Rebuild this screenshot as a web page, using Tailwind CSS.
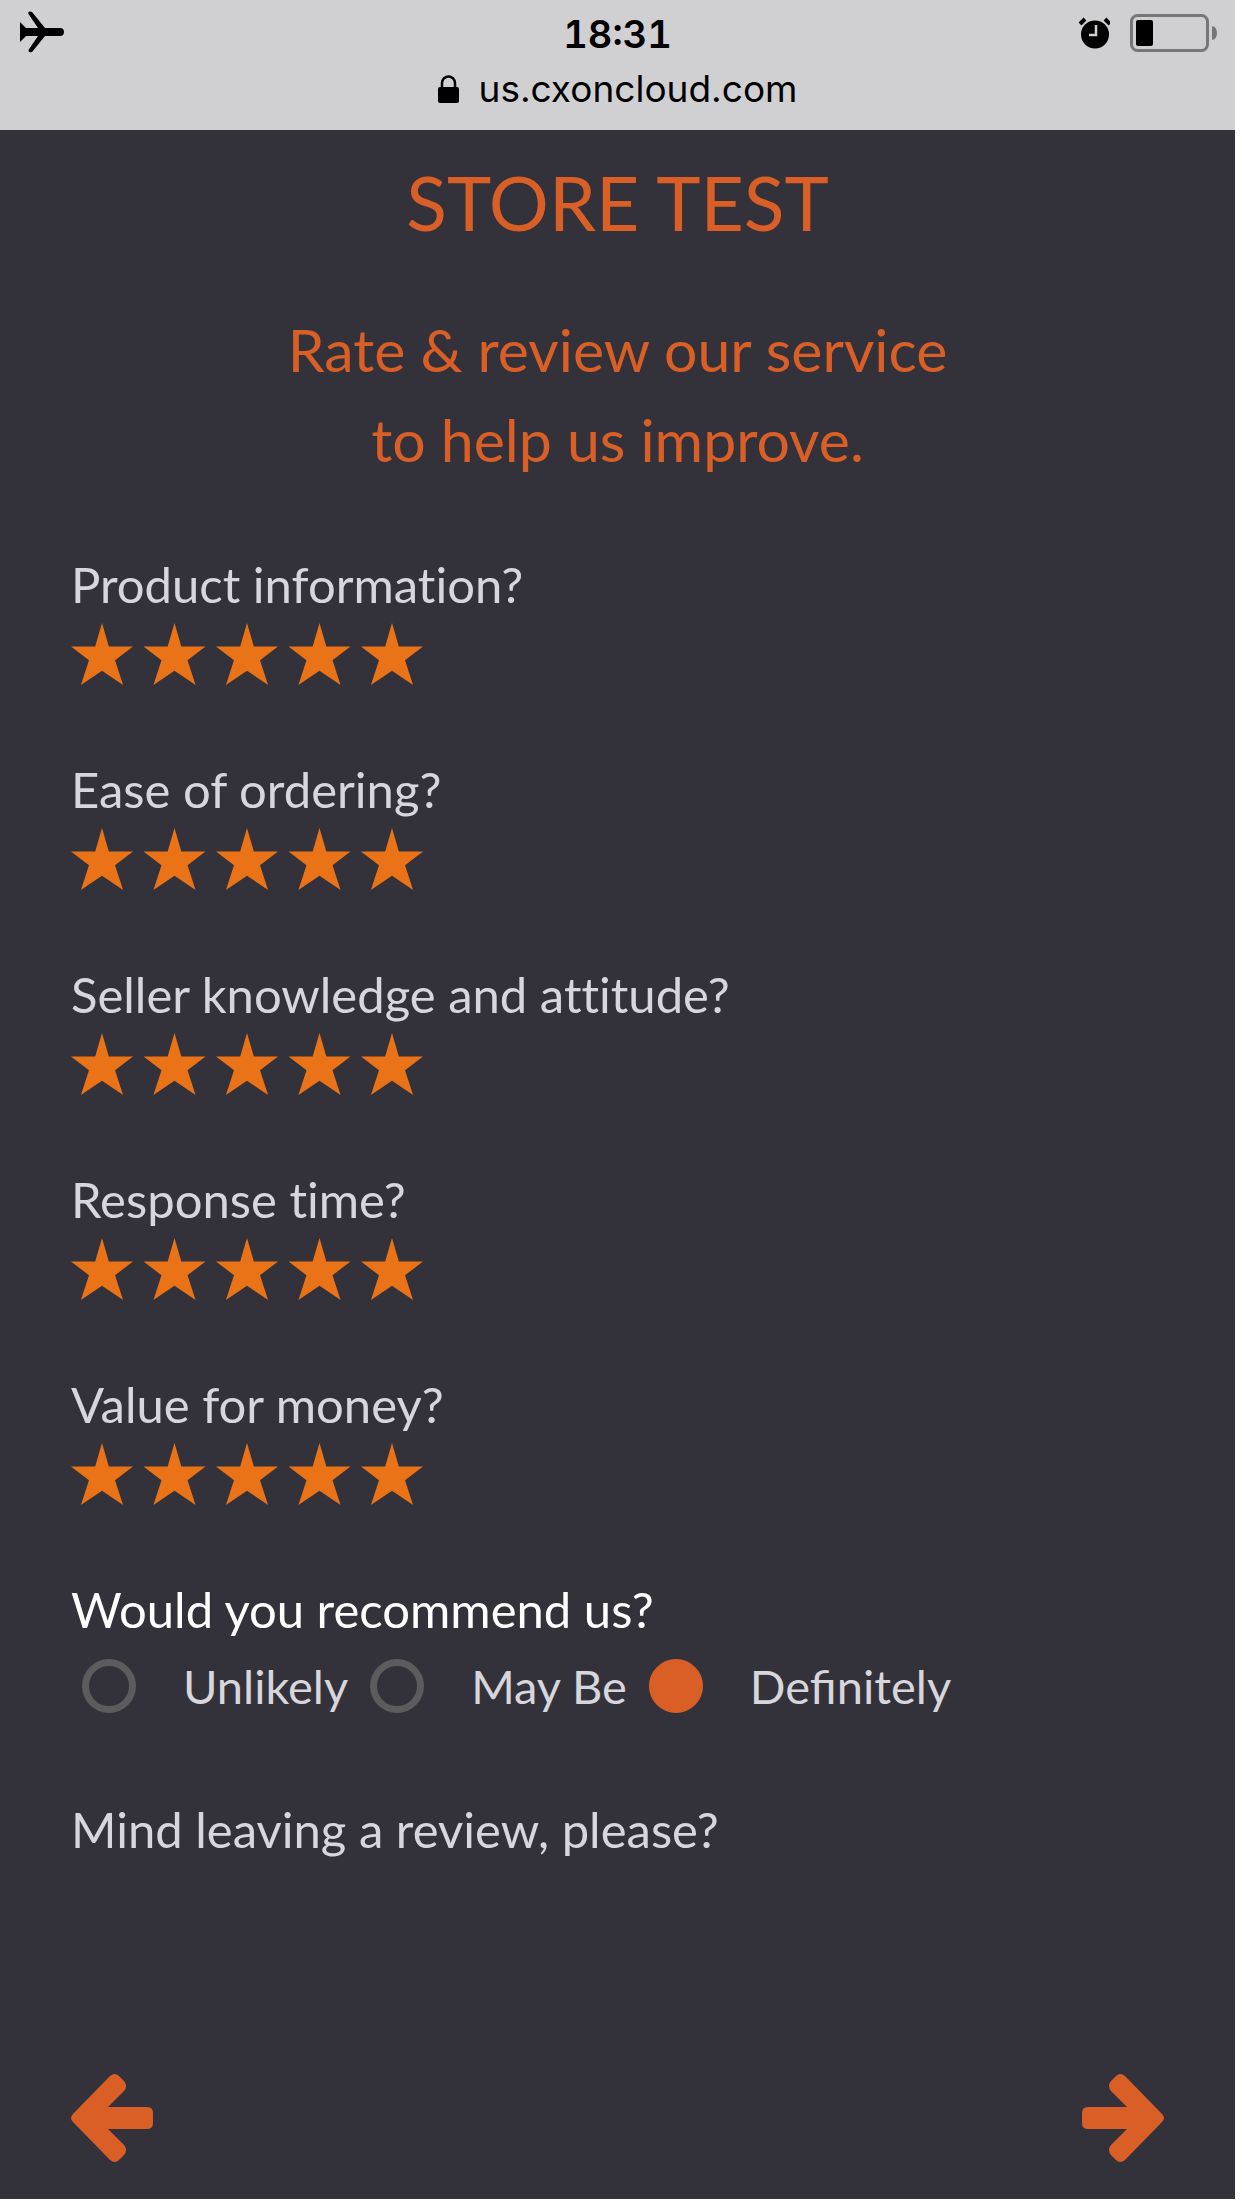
<!DOCTYPE html>
<html lang="en">
<head>
<meta charset="utf-8">
<meta name="viewport" content="width=device-width, initial-scale=1">
<title>Store Test</title>
<script src="https://cdn.jsdelivr.net/npm/@tailwindcss/browser@4"></script>
</head>
<body class="flex min-h-screen flex-col bg-white pr-[7px] pb-[9px]">
<header class="grid h-[130px] grid-cols-[1fr_auto_1fr] items-start bg-[#d0d0d2] px-[18px] pt-[10px] text-black font-['Inter',sans-serif]">
  <svg class="ml-[2px] h-[44px] w-[46px]" viewBox="0 0 46 44" role="img" aria-label="Airplane mode"><path d="M0 12L6 18H18L8.500 4Q7.500 2 10 1.500L12 2L25 18H40Q44 18 44 22Q44 26 40 26H25L12 42Q8 43 8.500 40L18 26H6L0 32Z"/></svg>
  <div class="flex flex-col items-center">
    <p class="text-[38px] leading-[48px] font-semibold tabular-nums">18:31</p>
    <p class="flex items-center gap-[20px] text-[37px] leading-[62px]">
      <svg class="h-[28px] w-[21px]" viewBox="0 0 21 28" aria-hidden="true"><path d="M4 13V8A6.500 6.500 0 0 1 17 8V13" fill="none" stroke="#000" stroke-width="2.500"/><rect y="12" width="21" height="16" rx="2"/></svg>
      us.cxoncloud.com
    </p>
  </div>
  <div class="flex items-center justify-end gap-[20px] pt-[4px]">
    <svg class="h-[32px] w-[32px]" viewBox="0 0 32 32" role="img" aria-label="Alarm"><circle cx="17" cy="17.500" r="14"/><path d="M2 7L7 2M27 2L32 7" stroke="#000" stroke-width="4"/><path d="M18 8V18H11" fill="none" stroke="#d0d0d2" stroke-width="2.500"/></svg>
    <svg class="h-[38px] w-[87px]" viewBox="0 0 87 38" role="img" aria-label="Battery"><rect x="1.500" y="1.500" width="76" height="35" rx="6" fill="none" stroke="#77777a" stroke-width="3"/><rect x="6" y="6" width="17" height="26" rx="2"/><path d="M82 12Q87 13 87 19T82 26Z" fill="#77777a"/></svg>
  </div>
</header>
<main class="flex flex-1 flex-col bg-[#33323a] px-[71px] pt-[22px] pb-[37px] text-[#d7d6dc] font-['Lato',sans-serif]">
  <h1 class="text-center text-[75px] leading-[100px] text-[#d95f27]">STORE TEST</h1>
  <p class="pt-[53px] text-center text-[59px] leading-[90px] text-[#d95f27]">Rate &amp; review our service<br>to help us improve.</p>
  <form class="flex flex-1 flex-col pt-[69px] text-[49px]">
    <div id="ratings"></div>
    <fieldset class="h-[220px]">
      <legend class="leading-[60px] text-white">Would you recommend us?</legend>
      <div class="flex gap-[22px] pt-[19px] pl-[11px] text-[47px] leading-[56px]">
        <label class="flex items-center gap-[47px]"><input type="radio" name="recommend" class="size-[54px] appearance-none rounded-full border-[7px] border-[#5c5b5d] checked:border-[#d95f27] checked:bg-[#d95f27]">Unlikely</label>
        <label class="flex items-center gap-[47px]"><input type="radio" name="recommend" class="size-[54px] appearance-none rounded-full border-[7px] border-[#5c5b5d] checked:border-[#d95f27] checked:bg-[#d95f27]">May Be</label>
        <label class="flex items-center gap-[47px]"><input type="radio" name="recommend" checked class="size-[54px] appearance-none rounded-full border-[7px] border-[#5c5b5d] checked:border-[#d95f27] checked:bg-[#d95f27]">Definitely</label>
      </div>
    </fieldset>
    <label for="review" class="leading-[60px]">Mind leaving a review, please?</label>
    <textarea id="review" class="min-h-[100px] flex-1 resize-none bg-transparent outline-none"></textarea>
    <div class="flex justify-between">
      <button type="button" aria-label="Back" class="text-[#d95f27]"><svg class="h-[88px] w-[82px]" viewBox="0 0 82 88" fill="currentColor"><path d="M39 2Q44 -2 48 2L53 7Q57 12 53 17L37 33H76Q82 33 82 39V49Q82 55 76 55H37L53 71Q57 76 53 81L48 86Q44 90 39 86L2 48Q-2 44 2 40Z"/></svg></button>
      <button type="submit" aria-label="Next" class="text-[#d95f27]"><svg class="h-[88px] w-[82px]" viewBox="0 0 82 88" fill="currentColor"><path d="M43 2Q38 -2 34 2L29 7Q25 12 29 17L45 33H6Q0 33 0 39V49Q0 55 6 55H45L29 71Q25 76 29 81L34 86Q38 90 43 86L80 48Q84 44 80 40Z"/></svg></button>
    </div>
  </form>
</main>
<script>
const questions = ["Product information?", "Ease of ordering?", "Seller knowledge and attitude?", "Response time?", "Value for money?"];
document.getElementById("ratings").innerHTML = questions.map((q, i) => `
  <fieldset class="h-[205px]">
    <legend class="leading-[60px] [font-variant-ligatures:none]">${q}</legend>
    <div class="flex w-[352px] justify-between pt-[9px]">
      ${[1, 2, 3, 4, 5].map(n => `<input type="radio" name="rating-${i}" value="${n}" aria-label="${n} stars" ${n === 5 ? "checked" : ""} class="size-[62px] appearance-none bg-[#ea7317] [clip-path:polygon(50%_0,61%_38%,100%_38%,71%_60%,84%_100%,50%_77%,16%_100%,29%_60%,0_38%,39%_38%)]">`).join("")}
    </div>
  </fieldset>`).join("");
</script>
</body>
</html>
